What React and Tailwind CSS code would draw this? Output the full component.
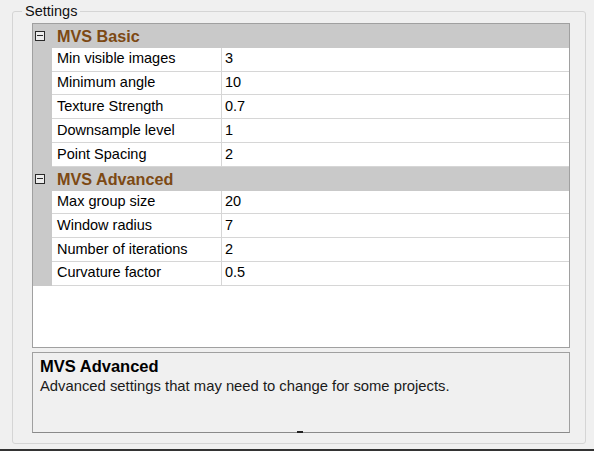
import React from 'react'

const basic = [
    ['Min visible images', '3'],
    ['Minimum angle', '10'],
    ['Texture Strength', '0.7'],
    ['Downsample level', '1'],
    ['Point Spacing', '2'],
]

const advanced = [
    ['Max group size', '20'],
    ['Window radius', '7'],
    ['Number of iterations', '2'],
    ['Curvature factor', '0.5'],
]

const Category = ({title}) => (
    <div className="flex items-center h-[23.8px] bg-[#c9c9c9] pl-[2px]">
        <div className="w-[10px] h-[10px] border border-[#2a2a2a] bg-[#ececec] flex items-center justify-center">
            <div className="w-[6px] h-[1px] bg-[#2a2a2a]" />
        </div>
        <span className="ml-[12px] text-[16.2px] font-bold text-[#7d4914] leading-none">{title}</span>
    </div>
)

const Row = ({label, value}) => (
    <div className="flex h-[23.8px]">
        <div className="w-[19px] bg-[#c9c9c9]" />
        <div className="w-[170px] flex items-center pl-[5px] bg-white border-r border-b border-[#d6d6d6]">
            {label}
        </div>
        <div className="flex-1 flex items-center pl-[3px] bg-white border-b border-[#d6d6d6]">
            {value}
        </div>
    </div>
)

export default function App() {
    return (
        <div className="w-[594px] h-[451px] bg-[#f0f0f0] flex flex-col font-['Liberation_Sans',Arial,sans-serif] text-[14.5px] text-black">
            <div className="pt-[3px] pl-[12px]">
                <fieldset className="w-[574px] h-[441px] border border-[#d5d5d5] rounded-[3px] pl-[19px] pr-[15px] flex flex-col">
                    <legend className="-ml-[10px] px-[3px] leading-[17px] text-[#111]">Settings</legend>
                    <div className="mt-[3px] h-[325px] border border-[#a0a0a0] bg-white flex flex-col">
                        <Category title="MVS Basic" />
                        {basic.map(([l, v]) => <Row key={l} label={l} value={v} />)}
                        <Category title="MVS Advanced" />
                        {advanced.map(([l, v]) => <Row key={l} label={l} value={v} />)}
                        <div className="flex-1 bg-white" />
                    </div>
                    <div className="relative mt-[4px] h-[81px] border border-[#a0a0a0] border-b-[#8a8a8a] bg-[#f0f0f0] pl-[7px] pt-[4px]">
                        <div className="text-[16.5px] font-bold leading-[18px]">MVS Advanced</div>
                        <div className="mt-[3px] text-[14.8px] leading-[17px] text-[#1a1a1a]">Advanced settings that may need to change for some projects.</div>
                        <div className="absolute bottom-[-1px] left-[264px] w-[6px] h-[2px] bg-[#222]" />
                    </div>
                </fieldset>
            </div>
            <div className="mt-auto h-[2px] bg-[#333]" />
        </div>
    );
}
